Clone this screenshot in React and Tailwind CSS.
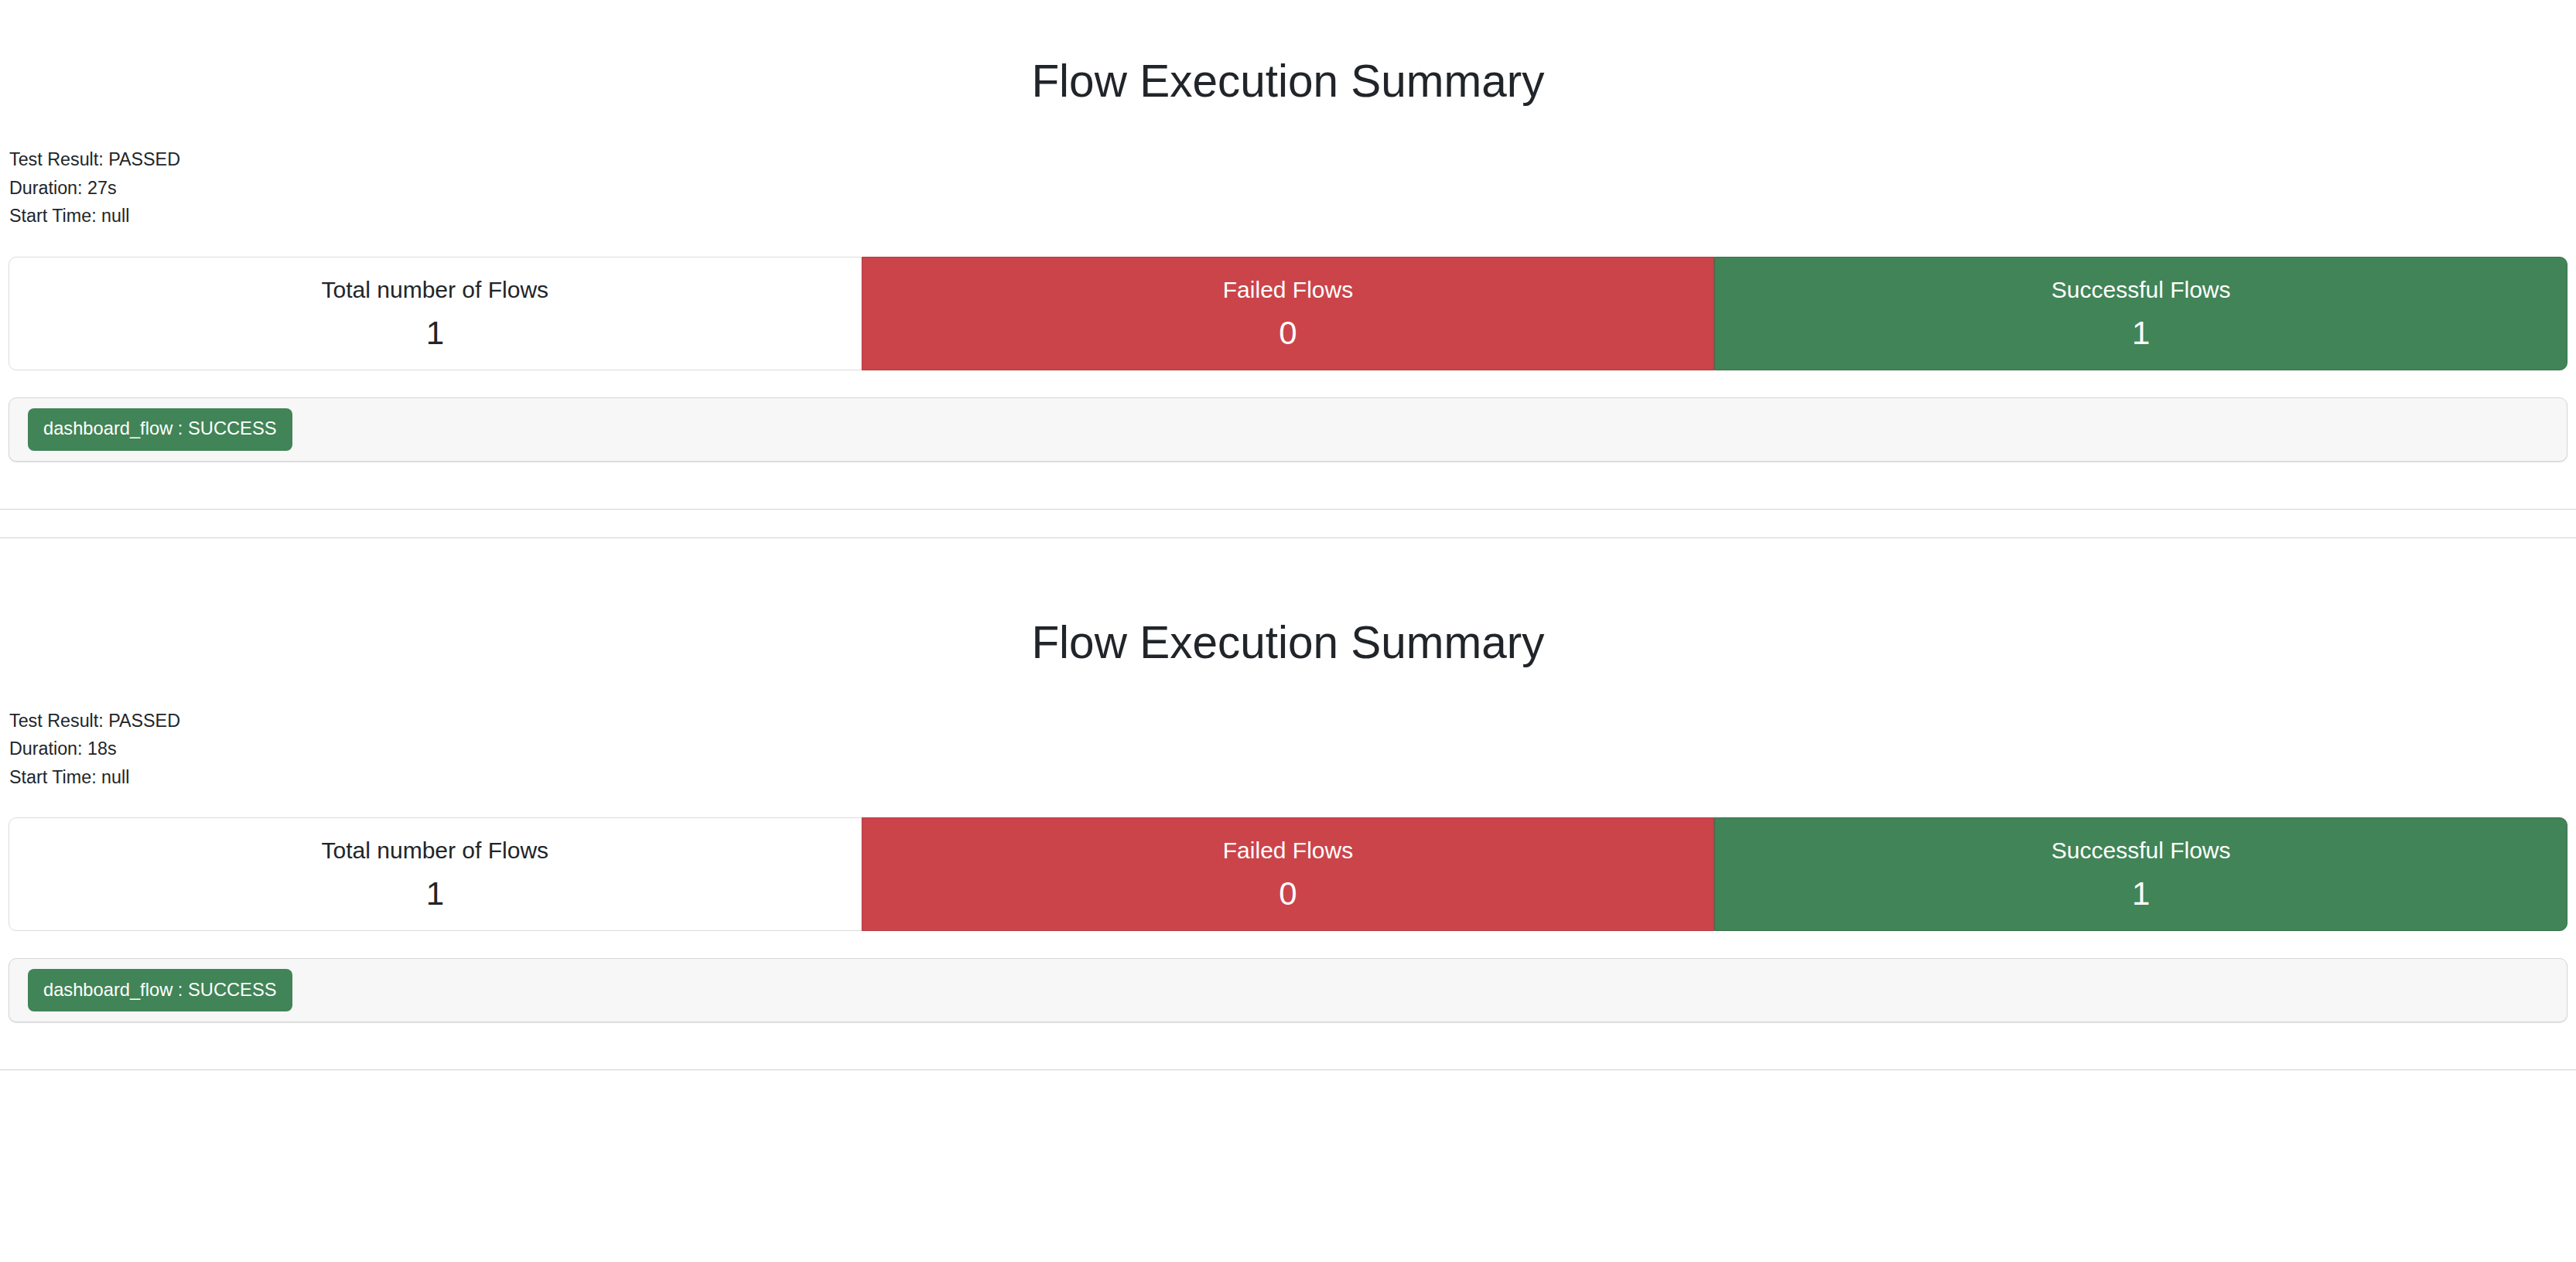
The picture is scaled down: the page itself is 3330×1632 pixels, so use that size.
import React from "react";

const sections = [
  { duration: "27s" },
  { duration: "18s" },
];

function Section({ duration }) {
  return (
    <section>
      <h1 className="pt-[70px] text-center text-[58.5px] leading-[70px] font-normal text-[#212529]">
        Flow Execution Summary
      </h1>
      <div className="mt-[48px] px-[12px] text-[23.3px] leading-[36.5px] text-[#212529]">
        <div>Test Result: PASSED</div>
        <div>Duration: {duration}</div>
        <div>Start Time: null</div>
      </div>
      <div className="mx-[11px] mt-[34px] grid h-[147px] grid-cols-3">
        <div className="flex flex-col items-center rounded-l-[10px] border border-[#dcdcdc] bg-white pt-[19px] text-[#212529]">
          <div className="text-[30px] leading-[45px]">Total number of Flows</div>
          <div className="mt-[9px] text-[42px] leading-[50px]">1</div>
        </div>
        <div className="flex flex-col items-center border border-[#b63d43] bg-[#cb444a] pt-[19px] text-white">
          <div className="text-[30px] leading-[45px]">Failed Flows</div>
          <div className="mt-[9px] text-[42px] leading-[50px]">0</div>
        </div>
        <div className="flex flex-col items-center rounded-r-[10px] border border-[#38744c] bg-[#418457] pt-[19px] text-white">
          <div className="text-[30px] leading-[45px]">Successful Flows</div>
          <div className="mt-[9px] text-[42px] leading-[50px]">1</div>
        </div>
      </div>
      <div className="mx-[11px] mt-[35px] flex h-[83px] items-center rounded-[10px] border border-[#d6d6d6] bg-[#f7f7f7] px-[24px] shadow-[0_1px_1px_rgba(0,0,0,0.12)]">
        <span className="flex h-[55px] items-center rounded-[8px] bg-[#418457] px-[20px] text-[23.7px] text-white">
          dashboard_flow : SUCCESS
        </span>
      </div>
      <div className="mt-[61px] border-t border-[#d2d2d2]" />
    </section>
  );
}

export default function App() {
  return (
    <div className="min-h-[1632px] w-full bg-white font-['Liberation_Sans',Arial,sans-serif]">
      {sections.map((s, i) => (
        <React.Fragment key={i}>
          {i > 0 && (
            <div className="mt-[36px] mb-[30px] border-t border-[#d2d2d2]" />
          )}
          <Section duration={s.duration} />
        </React.Fragment>
      ))}
    </div>
  );
}
